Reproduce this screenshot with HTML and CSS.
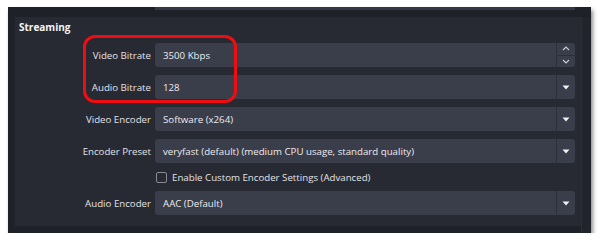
FILE: index.html
```html
<!DOCTYPE html>
<html>
<head>
<meta charset="utf-8">
<link rel="stylesheet" href="styles.css">
</head>
<body>
<div class="window">
  <div class="top-strip"><div class="prev-field"></div></div>
  <div class="body">
    <section class="group">
      <div class="group-title">Streaming</div>
      <div class="form">
        <label class="lbl">Video Bitrate</label>
        <div class="field">
          <span class="val">3500 Kbps</span>
          <div class="spin">
            <div class="spin-btn"><svg width="8" height="5" viewBox="0 0 8 5"><path d="M1 4 L4 1 L7 4" fill="none" stroke="#c9cad0" stroke-width="1.2"/></svg></div>
            <div class="spin-btn spin-down"><svg width="8" height="5" viewBox="0 0 8 5"><path d="M1 1 L4 4 L7 1" fill="none" stroke="#c9cad0" stroke-width="1.2"/></svg></div>
          </div>
        </div>

        <label class="lbl">Audio Bitrate</label>
        <div class="field">
          <span class="val">128</span>
          <div class="drop"><svg width="8" height="5" viewBox="0 0 8 5"><path d="M0.5 0.5 L7.5 0.5 L4 4.5 Z" fill="#f2f2f4"/></svg></div>
        </div>

        <label class="lbl">Video Encoder</label>
        <div class="field">
          <span class="val">Software (x264)</span>
          <div class="drop"><svg width="8" height="5" viewBox="0 0 8 5"><path d="M0.5 0.5 L7.5 0.5 L4 4.5 Z" fill="#f2f2f4"/></svg></div>
        </div>

        <label class="lbl">Encoder Preset</label>
        <div class="field">
          <span class="val">veryfast (default) (medium CPU usage, standard quality)</span>
          <div class="drop"><svg width="8" height="5" viewBox="0 0 8 5"><path d="M0.5 0.5 L7.5 0.5 L4 4.5 Z" fill="#f2f2f4"/></svg></div>
        </div>

        <span class="lbl"></span>
        <div class="check-row"><span class="checkbox"></span><span class="check-text">Enable Custom Encoder Settings (Advanced)</span></div>

        <label class="lbl">Audio Encoder</label>
        <div class="field">
          <span class="val">AAC (Default)</span>
          <div class="drop"><svg width="8" height="5" viewBox="0 0 8 5"><path d="M0.5 0.5 L7.5 0.5 L4 4.5 Z" fill="#f2f2f4"/></svg></div>
        </div>
      </div>
    </section>
    <div class="scrollbar"></div>
  </div>
  <div class="highlight"></div>
</div>
</body>
</html>
```
FILE: styles.css
```css
html, body {
  margin: 0;
  padding: 0;
  background: #ffffff;
}
body {
  font-family: "Open Sans", "Noto Sans", sans-serif;
  font-size: 9.7px;
  color: #e6e6ea;
}
.window {
  position: relative;
  margin: 7px 0 0 8px;
  width: 583px;
  height: 226px;
  background: #1f2129;
  box-shadow: 2px 3px 4px rgba(0, 0, 0, 0.45);
  display: flex;
  flex-direction: column;
}
.top-strip {
  height: 10px;
  padding-left: 147px;
  padding-right: 16px;
}
.prev-field {
  height: 3px;
  background: #353844;
}
.body {
  display: flex;
  flex: 1;
  padding-left: 7px;
}
.group {
  width: 566px;
  height: 209px;
  background: #272a33;
  box-sizing: border-box;
  padding: 3px 6px 0 4px;
}
.group-title {
  font-weight: 700;
  font-size: 10px;
  line-height: 14px;
  color: #f4f4f6;
  height: 14px;
  margin-bottom: 9px;
}
.form {
  display: grid;
  grid-template-columns: 132px 420px;
  column-gap: 4px;
  row-gap: 8px;
  align-items: center;
}
.lbl {
  text-align: right;
  color: #e2e2e6;
}
.field {
  height: 24px;
  background: #3a3d4a;
  border-radius: 3px;
  display: flex;
  align-items: center;
}
.val {
  flex: 1;
  padding-left: 8px;
  color: #ececf0;
  white-space: nowrap;
}
.spin {
  width: 18px;
  height: 24px;
  border-left: 1px solid #2c2f39;
  display: flex;
  flex-direction: column;
}
.spin-btn {
  flex: 1;
  display: flex;
  align-items: center;
  justify-content: center;
}
.spin-down {
  border-top: 1px solid #2c2f39;
}
.drop {
  width: 18px;
  height: 24px;
  border-left: 1px solid #2c2f39;
  display: flex;
  align-items: center;
  justify-content: center;
}
.check-row {
  height: 12px;
  display: flex;
  align-items: center;
  padding-left: 1px;
}
.checkbox {
  width: 9px;
  height: 9px;
  border: 1px solid #8a8c94;
  border-radius: 2px;
  margin-right: 5px;
}
.check-text {
  color: #e2e2e6;
}
.scrollbar {
  width: 10px;
  background: #22242c;
  border-left: 1px solid #2b2d35;
}
.highlight {
  position: absolute;
  left: 75px;
  top: 28px;
  width: 148px;
  height: 62px;
  border: 3px solid #f00d12;
  border-radius: 12px;
}
```
